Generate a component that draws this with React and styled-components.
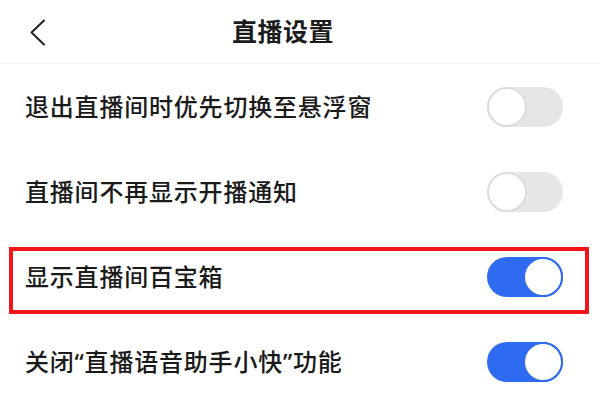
import React from 'react'
import styled, { createGlobalStyle } from 'styled-components'

const GlobalStyle = createGlobalStyle`
    html, body {
        margin: 0;
        padding: 0;
        background: #ffffff;
    }
    body {
        font-family: "Noto Sans", "Noto Sans CJK SC", sans-serif;
    }
`

// - - - - - - PAGE - - - - - - //

const Page = styled.div`
    width: 600px;
    height: 406px;
    overflow: hidden;
    background: #ffffff;
`

// - - - - - - HEADER - - - - - - //

const Header = styled.div`
    height: 63px;
    display: grid;
    grid-template-columns: 232px auto 1fr;
    align-items: center;
    border-bottom: 1px solid #efefef;
`

const BackButton = styled.div`
    padding-left: 29px;
    display: flex;
    align-items: center;
    height: 100%;
    padding-top: 1px;
`

const Title = styled.h1`
    margin: 0;
    font-size: 25px;
    font-weight: 700;
    letter-spacing: 0.5px;
    color: #1c1c1c;
    line-height: 1;
`

// - - - - - - SETTINGS LIST - - - - - - //

const List = styled.div`
    display: flex;
    flex-direction: column;
`

const Row = styled.div`
    position: relative;
    height: 85px;
    padding: 0 37px 0 25px;
    display: flex;
    align-items: center;
    justify-content: space-between;

    ${props => props.highlighted && `
        &::after {
            content: "";
            position: absolute;
            top: 13px;
            bottom: 5px;
            left: 9px;
            right: 11px;
            border: 4px solid #f2151b;
            pointer-events: none;
        }
    `}
`

const Label = styled.span`
    font-size: 24px;
    font-weight: 500;
    letter-spacing: 0.8px;
    color: #1a1a1a;
    line-height: 1;
`

const Track = styled.div`
    position: relative;
    width: 76px;
    height: 40px;
    border-radius: 20px;
    background: ${props => props.on ? '#2f6bf1' : '#e6e6e6'};
    flex-shrink: 0;
`

const Knob = styled.div`
    position: absolute;
    top: 0;
    ${props => props.on ? 'right: 0;' : 'left: 0;'}
    width: 40px;
    height: 40px;
    box-sizing: border-box;
    border-radius: 50%;
    background: #ffffff;
    border: 2px solid ${props => props.on ? '#2f6bf1' : '#dcdcdc'};
`

const Toggle = ({ on }) => (
    <Track on={on ? 1 : 0}>
        <Knob on={on ? 1 : 0} />
    </Track>
)

const settings = [
    { label: '退出直播间时优先切换至悬浮窗', on: false },
    { label: '直播间不再显示开播通知', on: false },
    { label: '显示直播间百宝箱', on: true, highlighted: true },
    { label: '关闭“直播语音助手小快”功能', on: true },
]

export default function App() {
    return (
        <Page>
            <GlobalStyle />

            {/* - - HEADER - - */}
            <Header>
                <BackButton>
                    <svg width="17" height="27" viewBox="0 0 17 27" fill="none">
                        <path d="M15 1.5 L2.5 13.5 L15 25.5" stroke="#222" strokeWidth="2" strokeLinecap="round" strokeLinejoin="round" />
                    </svg>
                </BackButton>
                <Title>直播设置</Title>
                <div />
            </Header>

            {/* - - SETTINGS - - */}
            <List>
                {settings.map(item => (
                    <Row key={item.label} highlighted={item.highlighted ? 1 : 0}>
                        <Label>{item.label}</Label>
                        <Toggle on={item.on} />
                    </Row>
                ))}
            </List>
        </Page>
    )
}
